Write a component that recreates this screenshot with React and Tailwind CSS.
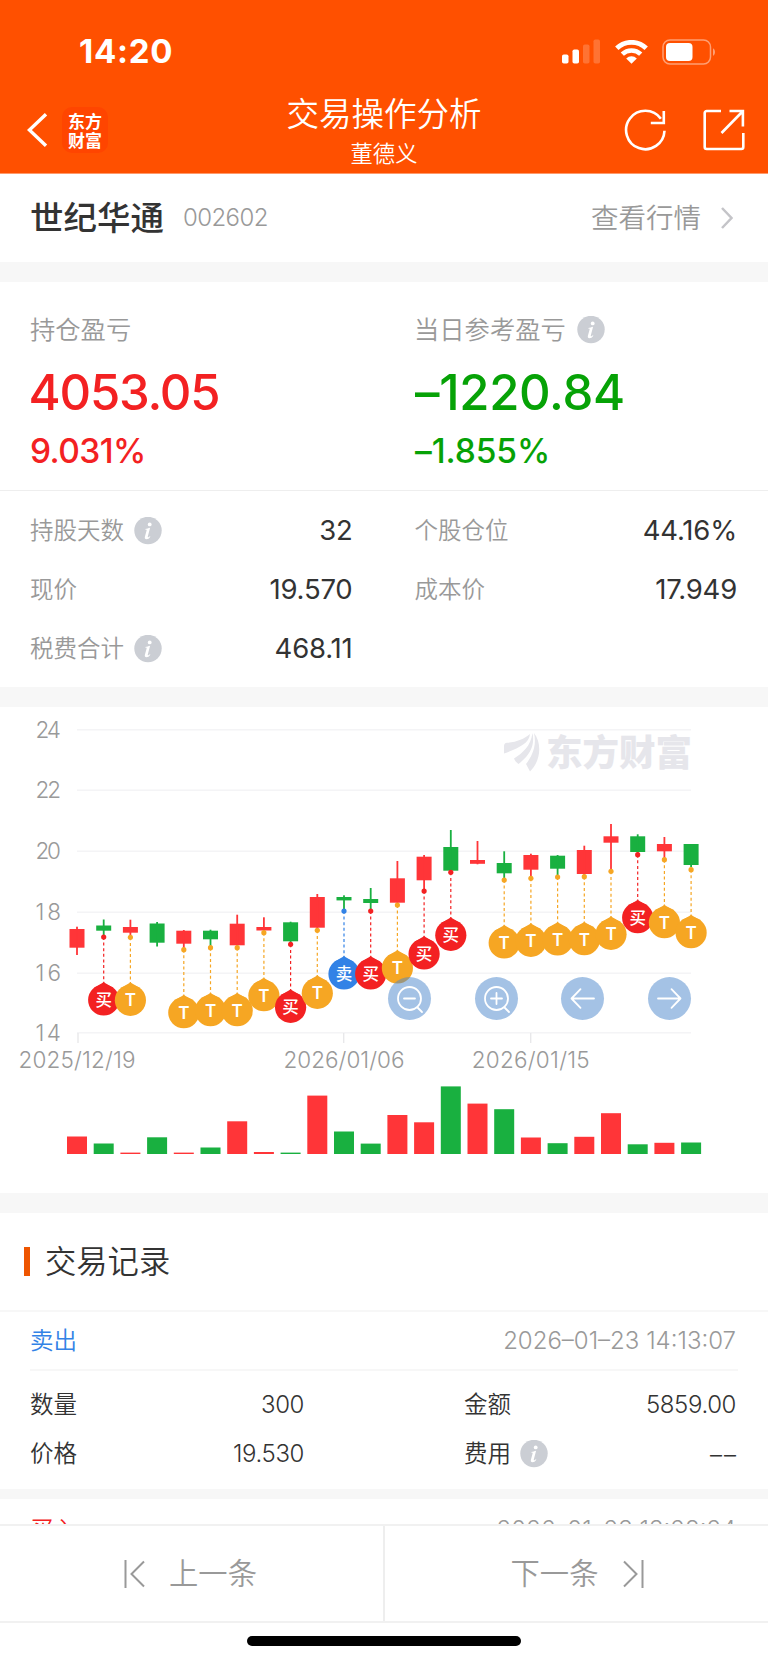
import React from 'react';

const RED = '#ff3538';
const GREEN = '#19b040';

// x of the first candle and the distance between two of them
const CHART_LEFT = 77;
const CHART_STEP = 26.7;

const MARKS = {
  buy: { color: '#f32122', text: '买' },
  sell: { color: '#3282e6', text: '卖' },
  t: { color: '#f6a623', text: 'T' },
};

// body and wick are [top, bottom], vol is the top of the volume bar
const CANDLES = [
  { up: true, body: [929, 947.7], wick: [926.7, 955], vol: 1136.5 },
  { up: false, body: [925.5, 930.7], wick: [919.5, 936], vol: 1143.5, mark: 'buy', dot: 937 },
  { up: true, body: [927, 932.7], wick: [919.7, 935], vol: 1152.6, mark: 't', dot: 937.3 },
  { up: false, body: [923.5, 942.7], wick: [922, 946.5], vol: 1137.3 },
  { up: true, body: [930.7, 943.7], wick: [930, 948], vol: 1152.6, mark: 't', dot: 949.7 },
  { up: false, body: [930.7, 939.3], wick: [929.7, 946], vol: 1147.5, mark: 't', dot: 947.7 },
  { up: true, body: [923.7, 945.3], wick: [914.7, 947], vol: 1121.3, mark: 't', dot: 947.7 },
  { up: true, body: [927, 930.5], wick: [917.3, 931], vol: 1152, mark: 't', dot: 932.7 },
  { up: false, body: [922.3, 941.3], wick: [921.7, 943], vol: 1152.6, mark: 'buy', dot: 944.3 },
  { up: true, body: [897, 927.7], wick: [894, 928], vol: 1095.6, mark: 't', dot: 930.3 },
  { up: false, body: [897, 900.4], wick: [895.3, 909], vol: 1131.5, mark: 'sell', dot: 911 },
  { up: false, body: [899, 903], wick: [888, 910], vol: 1143.6, mark: 'buy', dot: 911 },
  { up: true, body: [878.3, 902.7], wick: [861, 904], vol: 1115, mark: 't', dot: 905 },
  { up: true, body: [856.7, 880.3], wick: [855, 890], vol: 1122.3, mark: 'buy', dot: 891 },
  { up: false, body: [847, 870.7], wick: [830, 872], vol: 1086.4, mark: 'buy', dot: 872.3 },
  { up: true, body: [860, 863.8], wick: [841, 864.3], vol: 1103.6 },
  { up: false, body: [863, 873.3], wick: [851.3, 878], vol: 1109.2, mark: 't', dot: 880 },
  { up: true, body: [855, 869.7], wick: [853.7, 877], vol: 1137.5, mark: 't', dot: 878.3 },
  { up: false, body: [855.7, 868.7], wick: [855, 875], vol: 1143.2, mark: 't', dot: 877 },
  { up: true, body: [850, 874], wick: [845.7, 875], vol: 1136.8, mark: 't', dot: 876.7 },
  { up: true, body: [836.3, 842.7], wick: [824, 870], vol: 1113.2, mark: 't', dot: 871.3 },
  { up: false, body: [836.3, 852], wick: [834.3, 853], vol: 1144.3, mark: 'buy', dot: 854.7 },
  { up: true, body: [844, 851.3], wick: [837, 858], vol: 1142.8, mark: 't', dot: 859.7 },
  { up: false, body: [844, 865], wick: [844, 867], vol: 1142.5, mark: 't', dot: 869.7 },
];

const GRID = [
  { y: 729.8, label: '24' },
  { y: 790.3, label: '22' },
  { y: 851.3, label: '20' },
  { y: 912.3, label: '18' },
  { y: 973.3, label: '16' },
  { y: 1032.7, label: '14' },
];

const DATES = [
  { tick: 78, x: 77, label: '2025/12/19', width: 117 },
  { tick: 343.7, x: 344, label: '2026/01/06', width: 121 },
  { tick: 530.7, x: 530.7, label: '2026/01/15', width: 118 },
];

const InfoIcon = ({ className = '' }) => (
  <svg viewBox="0 0 28 28" className={`h-7 w-7 shrink-0 ${className}`}>
    <circle cx="14" cy="13.5" r="13.7" fill="#cbced4" />
    <circle cx="15.7" cy="7.4" r="1.9" fill="#fff" />
    <path
      d="M11.2 11.9c1.9-.3 3.2-.8 4.9-1.2l-2.3 8.9c-.3 1.2.5 1 2.1-.3l.5.4c-1.2 1.7-2.5 2.5-3.9 2.5-1.5 0-2-1-1.6-2.4l1.7-6.4c.2-.7 0-.9-1.4-.9z"
      fill="#fff"
    />
  </svg>
);

const StatusBar = () => (
  <div className="flex h-[86px] items-center justify-between pt-[17px] pr-[52px] pl-[79px]">
    <span className="text-[33px] leading-none font-bold tracking-[0.7px]">14:20</span>
    <div className="flex items-center">
      <svg width="39" height="25" viewBox="0 0 39 25" fill="#fff">
        <rect x="0" y="15.5" width="6.5" height="9" rx="1.8" />
        <rect x="10.5" y="10.5" width="6.5" height="14" rx="1.8" />
        <rect x="21" y="5.5" width="6.5" height="19" rx="1.8" opacity="0.2" />
        <rect x="31.5" y="0.5" width="6.5" height="24" rx="1.8" opacity="0.2" />
      </svg>
      <svg width="33" height="24" viewBox="0 0 33 24" fill="none" stroke="#fff" className="ml-[14px]">
        <path d="M1.8 8.3a21 21 0 0 1 29.4 0" strokeWidth="4.8" />
        <path d="M7.3 14.2a13.3 13.3 0 0 1 18.4 0" strokeWidth="4.6" />
        <path d="M11.2 18.4a7.7 7.7 0 0 1 10.6 0L16.5 23.8z" fill="#fff" stroke="none" />
      </svg>
      <svg width="54" height="26" viewBox="0 0 54 26" className="ml-[14px]">
        <rect x="1" y="1" width="47.5" height="24" rx="7" fill="none" stroke="#fff" strokeWidth="1.5" opacity="0.45" />
        <rect x="4" y="4" width="26.5" height="18" rx="4" fill="#fff" />
        <path d="M51 9.2c2.7 1.3 2.7 6.3 0 7.6z" fill="#fff" opacity="0.45" />
      </svg>
    </div>
  </div>
);

const NavBar = () => (
  <div className="flex h-[87px] items-center">
    <div className="flex w-[200px] items-center pt-px pl-[27px]">
      <svg width="21" height="34" viewBox="0 0 21 34" fill="none" stroke="#fff" strokeWidth="3.4">
        <path d="M19 1.3 2.4 17 19 32.7" />
      </svg>
      <p className="ml-[14px] flex h-[46px] w-[46px] items-center justify-center rounded-[10px] bg-[#ff4500] pb-px font-['Noto_Sans_CJK_SC',sans-serif] text-[17px] leading-[19px] font-bold">
        东方
        <br />
        财富
      </p>
    </div>
    <div className="flex h-full flex-1 flex-col items-center pt-[7px]">
      <h1 className="text-[32.5px] leading-[44px] font-[350]">交易操作分析</h1>
      <p className="text-[22.3px] leading-[34px]">董德义</p>
    </div>
    <div className="flex w-[200px] items-center justify-end gap-[37px] pt-px pr-[23px]">
      <svg width="42" height="42" viewBox="0 0 42 42" fill="none" stroke="#fff" strokeWidth="2.6">
        <path d="M40.5 21.8A19.2 19.2 0 1 1 36.9 9.8" />
        <path d="M39.8 2v12H26.8" />
      </svg>
      <svg width="42" height="42" viewBox="0 0 42 42" fill="none" stroke="#fff" strokeWidth="2.6">
        <path d="M18 2H3.7a2 2 0 0 0-2 2v34a2 2 0 0 0 2 2h34.6a2 2 0 0 0 2-2V24" />
        <path d="M26.5 2h13.4v15.5M39.5 2.5 18.5 24" />
      </svg>
    </div>
  </div>
);

const Stat = ({ label, value, info }) => (
  <div className="flex h-[59px] items-center">
    <span className="text-[23.5px] text-[#999]">{label}</span>
    {info && <InfoIcon className="ml-[10px]" />}
    <span className="ml-auto text-[27.5px] font-normal tracking-[-0.2px] text-[#333]">{value}</span>
  </div>
);

const Profit = ({ label, info, className, children }) => (
  <div className={className}>
    <div className="flex h-10 items-center">
      <span className="text-[25.3px] text-[#999]">{label}</span>
      {info && <InfoIcon className="ml-[11px]" />}
    </div>
    {children}
  </div>
);

const Mark = ({ x, dot, type }) => {
  const { color, text } = MARKS[type];
  const cy = dot + 63;

  return (
    <g>
      <line x1={x} x2={x} y1={dot} y2={cy - 17} stroke={color} strokeWidth="1.2" strokeDasharray="3 2.6" />
      <circle cx={x} cy={dot} r="2.6" fill={color} />
      <circle cx={x} cy={cy} r="15.6" fill={color} />
      <path d={`M${x - 10} ${cy - 12}Q${x - 3} ${cy - 16} ${x} ${cy - 18}Q${x + 3} ${cy - 16} ${x + 10} ${cy - 12}z`} fill={color} />
      <text
        x={x}
        y={cy + 6}
        textAnchor="middle"
        fill="#fff"
        fontSize={type === 't' ? 17 : 16.5}
        fontWeight={type === 't' ? 600 : 500}
      >
        {text}
      </text>
    </g>
  );
};

const ControlButton = ({ label, children }) => (
  <button type="button" aria-label={label} className="h-[43px] w-[43px] rounded-full bg-[#4986cb]/50">
    <svg viewBox="0 0 43 43" fill="none" stroke="#fff" strokeWidth="1.8" strokeLinecap="round" strokeLinejoin="round">
      {children}
    </svg>
  </button>
);

const TradeChart = () => (
  <section className="relative h-[486px] shrink-0">
    <svg width="768" height="486" viewBox="0 707 768 486" className="block">
      {/* grid and price axis */}
      {GRID.map(({ y, label }) => (
        <g key={label}>
          <line x1="77" x2="691" y1={y} y2={y} stroke="#f4f4f6" strokeWidth="1.6" />
          <text x="61" y={y + 8} textAnchor="end" fontSize="22.5" fill="#999" textLength="25.5">{label}</text>
        </g>
      ))}
      {DATES.map(({ tick, x, label, width }) => (
        <g key={label}>
          <line x1={tick} x2={tick} y1="1033" y2="1043" stroke="#e8e8ea" strokeWidth="1.4" />
          <text x={x} y="1068" textAnchor="middle" fontSize="22.5" fill="#999" textLength={width}>{label}</text>
        </g>
      ))}

      {/* watermark */}
      <g fill="#e6e6eb">
        <path d="M504 746c0-2 1-3 3-3.2C517 742 524 739 530 734c-1 10-12 14-26 19.5z" />
        <path d="M514 758.5c9-6 16.5-12 18.5-25.5 3 15-5 24-14 31-2-1.500-3.5-3-4.5-5.5z" />
        <path d="M526 764c6-8 11-18 8-31 8 10 7 28-4 38.5z" />
        <text x="546" y="766" fontSize="36.5" fontWeight="900" textLength="146" fontFamily="'Noto Sans CJK SC', sans-serif">东方财富</text>
      </g>

      {CANDLES.map(({ up, body, wick, vol }, i) => {
        const x = CHART_LEFT + i * CHART_STEP;
        const color = up ? RED : GREEN;
        return (
          <g key={i} fill={color}>
            <rect x={x - 7.5} y={body[0]} width="15" height={body[1] - body[0]} />
            <rect x={x - 0.9} y={wick[0]} width="1.8" height={wick[1] - wick[0]} />
            <rect x={x - 10} y={vol} width="20" height={1154 - vol} />
          </g>
        );
      })}
      {CANDLES.map(({ mark, dot }, i) =>
        mark ? <Mark key={i} x={CHART_LEFT + i * CHART_STEP} dot={dot} type={mark} /> : null
      )}
    </svg>

    {/* zoom and scroll buttons lie over the plot */}
    <div className="absolute top-[269.5px] left-[388px] flex gap-[43.5px]">
      <ControlButton label="缩小">
        <circle cx="21.5" cy="21.5" r="11.5" />
        <path d="M16 21.5h11M29.5 30.5l4.5 4.5" />
      </ControlButton>
      <ControlButton label="放大">
        <circle cx="21.5" cy="21.5" r="11.5" />
        <path d="M16 21.5h11M21.5 16v11M29.5 30.5l4.5 4.5" />
      </ControlButton>
      <ControlButton label="向左">
        <path d="M33 21.5H10.5M19.5 12.2l-9 9.3 9 9.3" />
      </ControlButton>
      <ControlButton label="向右">
        <path d="M10 21.5h22.5M23.5 12.2l9 9.3-9 9.3" />
      </ControlButton>
    </div>
  </section>
);

const RecordHead = ({ action, time, className }) => (
  <div className={`flex h-[57px] items-center justify-between text-[23.5px] ${className}`}>
    <span>{action}</span>
    <span className="mr-[2px] text-[24px] text-[#999]">{time}</span>
  </div>
);

const RecordField = ({ label, value, info, valueClassName = 'tracking-[-0.4px]' }) => (
  <div className="flex h-[49px] items-center pt-px text-[#333]">
    <span className="text-[23.5px]">{label}</span>
    {info && <InfoIcon className="ml-[9px]" />}
    <span className={`ml-auto text-[24px] ${valueClassName}`}>{value}</span>
  </div>
);

export default function App() {
  return (
    <div className="flex h-[1663px] w-[768px] flex-col overflow-hidden bg-white font-[Inter,'Noto_Sans_CJK_SC',sans-serif] font-[350]">
      <header className="h-[174px] shrink-0 border-b border-[#ff9a6b] bg-[#ff5000] text-white">
        <StatusBar />
        <NavBar />
      </header>

      <section className="flex h-[88px] shrink-0 items-center pr-[35px] pl-[30px]">
        <h2 className="pt-px text-[33.5px] font-medium text-[#333]">世纪华通</h2>
        <span className="ml-[19px] text-[24px] tracking-[-0.6px] text-[#999]">002602</span>
        <span className="ml-auto pt-px text-[27.5px] text-[#999]">查看行情</span>
        <svg width="12" height="22" viewBox="0 0 12 22" fill="none" stroke="#c4c4c8" strokeWidth="2.5" className="ml-[20px]">
          <path d="M1 1l9.5 10L1 21" />
        </svg>
      </section>

      <div className="h-5 shrink-0 bg-[#f7f7f7]" />

      <section className="h-[405px] shrink-0">
        <div className="grid h-[209px] grid-cols-2 border-b border-[#eee] pt-7">
          <Profit className="pl-[30px] text-[#f32122]" label="持仓盈亏">
            <div className="-ml-[1.5px] pt-px text-[49px] leading-[84px] font-medium tracking-[-1.2px]">4053.05</div>
            <div className="text-[33.5px] leading-[33px] font-medium tracking-[-0.6px]">9.031%</div>
          </Profit>
          <Profit className="pl-[30px] text-[#06a206]" label="当日参考盈亏" info>
            <div className="ml-px pt-px text-[49px] leading-[84px] font-medium tracking-[-0.3px]">–1220.84</div>
            <div className="ml-px text-[33.5px] leading-[33px] font-medium tracking-[-0.1px]">–1.855%</div>
          </Profit>
        </div>
        <div className="grid grid-cols-2 gap-x-[62px] pt-[10px] pr-[31px] pl-[30px]">
          <Stat label="持股天数" value="32" info />
          <Stat label="个股仓位" value="44.16%" />
          <Stat label="现价" value="19.570" />
          <Stat label="成本价" value="17.949" />
          <Stat label="税费合计" value="468.11" info />
        </div>
      </section>

      <div className="h-5 shrink-0 bg-[#f7f7f7]" />
      <TradeChart />
      <div className="h-5 shrink-0 bg-[#f7f7f7]" />

      <section className="min-h-0 flex-1 overflow-hidden">
        <div className="flex h-[97px] items-center pl-6">
          <span className="h-[29px] w-[6px] bg-[#ee5500]" />
          <h3 className="ml-[15px] pt-0.5 text-[31.3px] font-[350] text-[#333]">交易记录</h3>
        </div>

        <div className="border-t-2 border-[#f7f7f7]">
          <RecordHead className="mx-[30px] text-[#3282e6]" action="卖出" time="2026–01–23 14:13:07" />
          <div className="mx-[30px] grid grid-cols-[274px_272px] justify-between border-t-2 border-[#f7f7f7] pt-[9px] pr-[2px] pb-[11px]">
            <RecordField label="数量" value="300" />
            <RecordField label="金额" value="5859.00" />
            <RecordField label="价格" value="19.530" />
            <RecordField label="费用" value="––" valueClassName="-mr-[2px] pt-0.5 tracking-[2px]" info />
          </div>
        </div>

        <div className="border-t-[10px] border-[#f7f7f7] pt-[2px]">
          <RecordHead className="mx-[30px] text-[#f32122]" action="买入" time="2026–01–23 13:28:24" />
        </div>
      </section>

      <footer className="shrink-0">
        <div className="grid h-[99px] grid-cols-2 border-y-2 border-[#f1f1f1] bg-white text-[29.3px] text-[#999]">
          <button type="button" className="flex items-center justify-center gap-6 border-r border-[#eee] pt-px pr-0.5">
            <svg width="21" height="28" viewBox="0 0 21 28" fill="none" stroke="#999" strokeWidth="2">
              <path d="M1.5 0v28M20 1.5 7.5 14 20 26.5" />
            </svg>
            上一条
          </button>
          <button type="button" className="flex items-center justify-center gap-[25px] border-l border-[#eee] pt-px pl-0.5">
            下一条
            <svg width="21" height="28" viewBox="0 0 21 28" fill="none" stroke="#999" strokeWidth="2">
              <path d="M19.5 0v28M1 1.5 13.5 14 1 26.5" />
            </svg>
          </button>
        </div>
        <div className="flex h-10 justify-center pt-[13px]">
          <div className="h-[10px] w-[274px] rounded-full bg-black" />
        </div>
      </footer>
    </div>
  );
}
